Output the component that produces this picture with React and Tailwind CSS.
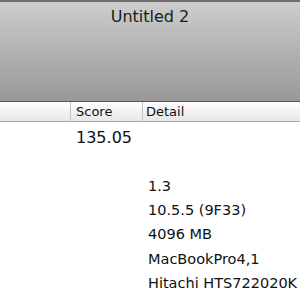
export default function App() {
  const details = ['1.3', '10.5.5 (9F33)', '4096 MB', 'MacBookPro4,1', 'Hitachi HTS722020K'];
  return (
    <div className="w-[300px] h-[300px] overflow-hidden bg-white text-[#111]" style={{ fontFamily: '"DejaVu Sans", "Liberation Sans", sans-serif' }}>
      {/* Title bar */}
      <div className="h-[102px] border-t-2 border-t-[#6e6e6e] border-b border-b-[#5a5a5a] bg-gradient-to-b from-[#cdcdcd] to-[#989898]">
        <div className="text-center text-[16px] leading-[16px] pt-[7px] text-[#1a1a1a]">Untitled 2</div>
      </div>

      {/* Column header */}
      <div className="flex h-[20px] border-b border-b-[#a9a9a9] bg-gradient-to-b from-white to-[#e6e6e6] text-[13px] leading-[19px]">
        <div className="w-[71px] border-r border-r-[#c4c4c4]"></div>
        <div className="w-[72px] border-r border-r-[#c4c4c4] pl-[5px]">Score</div>
        <div className="flex-1 pl-[3px]">Detail</div>
      </div>

      {/* Rows */}
      <div className="flex text-[16px] leading-[24px]">
        <div className="w-[71px]"></div>
        <div className="w-[72px] pl-[5px] pt-[4px]">135.05</div>
      </div>
      <div className="flex flex-col pl-[148px] pt-[24px] text-[14.5px] leading-[24.2px] whitespace-nowrap">
        {details.map(d => (
          <div key={d}>{d}</div>
        ))}
      </div>
    </div>
  );
}
